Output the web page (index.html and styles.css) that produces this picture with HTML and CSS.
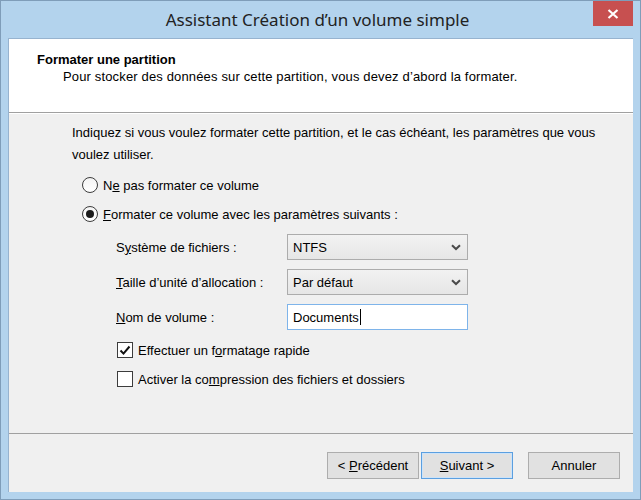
FILE: index.html
```html
<!DOCTYPE html>
<html lang="fr">
<head>
<meta charset="utf-8">
<title>Assistant Création d’un volume simple</title>
<link rel="stylesheet" href="styles.css">
</head>
<body>
<div class="window">
  <div class="titlebar">
    <div class="spacer"></div>
    <div class="title">Assistant Création d’un volume simple</div>
    <div class="tb-right">
      <div class="close">
        <svg width="12" height="10" viewBox="0 0 12 10"><path d="M1.5 1 L10.5 9 M10.5 1 L1.5 9" stroke="#fff" stroke-width="2.2" fill="none"/></svg>
      </div>
    </div>
  </div>
  <div class="client">
    <div class="header">
      <div class="h-title">Formater une partition</div>
      <div class="h-sub">Pour stocker des données sur cette partition, vous devez d’abord la formater.</div>
    </div>
    <div class="content">
      <p class="intro">Indiquez si vous voulez formater cette partition, et le cas échéant, les paramètres que vous<br>voulez utiliser.</p>
      <div class="radio-row first">
        <span class="radio"></span>
        <span class="label">N<u>e</u> pas formater ce volume</span>
      </div>
      <div class="radio-row">
        <span class="radio checked"></span>
        <span class="label"><u>F</u>ormater ce volume avec les paramètres suivants :</span>
      </div>
      <div class="fields">
        <span class="label">S<u>y</u>stème de fichiers :</span>
        <div class="select"><span>NTFS</span><svg width="10" height="7" viewBox="0 0 10 7"><path d="M1 1.2 L5 5 L9 1.2" stroke="#4a4a4a" stroke-width="2" fill="none"/></svg></div>
        <span class="label"><u>T</u>aille d’unité d’allocation :</span>
        <div class="select"><span>Par défaut</span><svg width="10" height="7" viewBox="0 0 10 7"><path d="M1 1.2 L5 5 L9 1.2" stroke="#4a4a4a" stroke-width="2" fill="none"/></svg></div>
        <span class="label"><u>N</u>om de volume :</span>
        <div class="textbox"><span>Documents</span><span class="caret"></span></div>
      </div>
      <div class="check-row first">
        <span class="check checked"><svg width="12" height="11" viewBox="0 0 12 11"><path d="M1.5 5.5 L4.5 8.6 L10.5 1.5" stroke="#111" stroke-width="2" fill="none"/></svg></span>
        <span class="label">Effectuer un f<u>o</u>rmatage rapide</span>
      </div>
      <div class="check-row">
        <span class="check"></span>
        <span class="label">Activer la co<u>m</u>pression des fichiers et dossiers</span>
      </div>
    </div>
    <div class="footer">
      <button class="btn">&lt; <u>P</u>récédent</button>
      <button class="btn default"><u>S</u>uivant &gt;</button>
      <button class="btn cancel">Annuler</button>
    </div>
  </div>
</div>
</body>
</html>
```

FILE: styles.css
```css
* { box-sizing: border-box; }
html, body { margin: 0; padding: 0; }
body {
  width: 641px;
  height: 500px;
  overflow: hidden;
  font-family: "Liberation Sans", Arial, sans-serif;
  font-size: 13px;
  color: #000;
}
.window {
  width: 641px;
  height: 500px;
  background: #b3d3ed;
  border: 1px solid #7f9db9;
  display: flex;
  flex-direction: column;
}
.titlebar {
  height: 37px;
  display: grid;
  grid-template-columns: 1fr auto 1fr;
  align-items: start;
  padding-right: 7px;
}
.title {
  font-family: "Noto Sans", "Open Sans", sans-serif;
  font-size: 17px;
  color: #222;
  line-height: 22px;
  padding-top: 8px;
  padding-left: 1px;
}
.tb-right { display: flex; justify-content: flex-end; }
.close {
  width: 40px;
  height: 25px;
  background: #c75050;
  display: flex;
  align-items: center;
  justify-content: center;
}
.client {
  flex: 1;
  margin: 0 7px 7px 7px;
  background: #f0f0f0;
  display: flex;
  flex-direction: column;
  border-left: 1px solid #97b3cf;
  border-top: 1px solid #97b3cf;
}
.header {
  height: 74px;
  background: #fff;
  border-bottom: 1px solid #a0a0a0;
  padding: 13px 0 0 28px;
}
.h-title {
  font-weight: bold;
  line-height: 16px;
}
.h-sub {
  margin-top: 1px;
  padding-left: 26px;
  line-height: 16px;
  letter-spacing: 0.15px;
}
.content {
  flex: 1;
  border-top: 1px solid #fff;
  padding-top: 8px;
}
.intro {
  margin: 0 0 0 63px;
  line-height: 22px;
  white-space: nowrap;
}
.radio-row {
  display: flex;
  align-items: center;
  gap: 5px;
  margin: 13px 0 0 73px;
  height: 16px;
}
.radio-row.first { margin-top: 11px; }
.radio {
  width: 16px;
  height: 16px;
  border-radius: 50%;
  border: 1px solid #3c3c3c;
  background: linear-gradient(#f4f4f4, #fff);
  display: flex;
  align-items: center;
  justify-content: center;
}
.radio.checked::after {
  content: "";
  width: 8px;
  height: 8px;
  border-radius: 50%;
  background: #1a1a1a;
}
.fields {
  display: grid;
  grid-template-columns: 171px 181px;
  row-gap: 9px;
  align-items: center;
  margin: 12px 0 0 107px;
}
.select, .textbox {
  height: 26px;
  display: flex;
  align-items: center;
  justify-content: space-between;
  padding: 0 6px 0 5px;
}
.select {
  border: 1px solid #acacac;
  background: linear-gradient(#f2f2f2, #e6e6e6);
}
.textbox {
  border: 1px solid #7eb4ea;
  background: #fff;
  justify-content: flex-start;
}
.caret {
  width: 1px;
  height: 16px;
  background: #000;
  margin-left: 1px;
}
.check-row {
  display: flex;
  align-items: center;
  gap: 5px;
  margin: 13px 0 0 108px;
  height: 16px;
}
.check-row.first { margin-top: 12px; }
.check {
  width: 16px;
  height: 16px;
  border: 1px solid #3c3c3c;
  background: #fff;
  display: flex;
  align-items: center;
  justify-content: center;
}
.footer {
  height: 59px;
  border-top: 1px solid #a0a0a0;
  display: flex;
  justify-content: flex-end;
  align-items: flex-start;
  padding: 18px 13px 0 0;
}
.btn {
  width: 92px;
  height: 27px;
  font-family: "Liberation Sans", Arial, sans-serif;
  font-size: 13px;
  color: #000;
  background: #e1e1e1;
  border: 1px solid #adadad;
  padding: 0;
  margin: 0 0 0 2px;
}
.btn.default {
  border: 1px solid #5b9fe0;
  box-shadow: inset 0 0 0 1px #cde3f8;
}
.btn.cancel { margin-left: 15px; }
```
